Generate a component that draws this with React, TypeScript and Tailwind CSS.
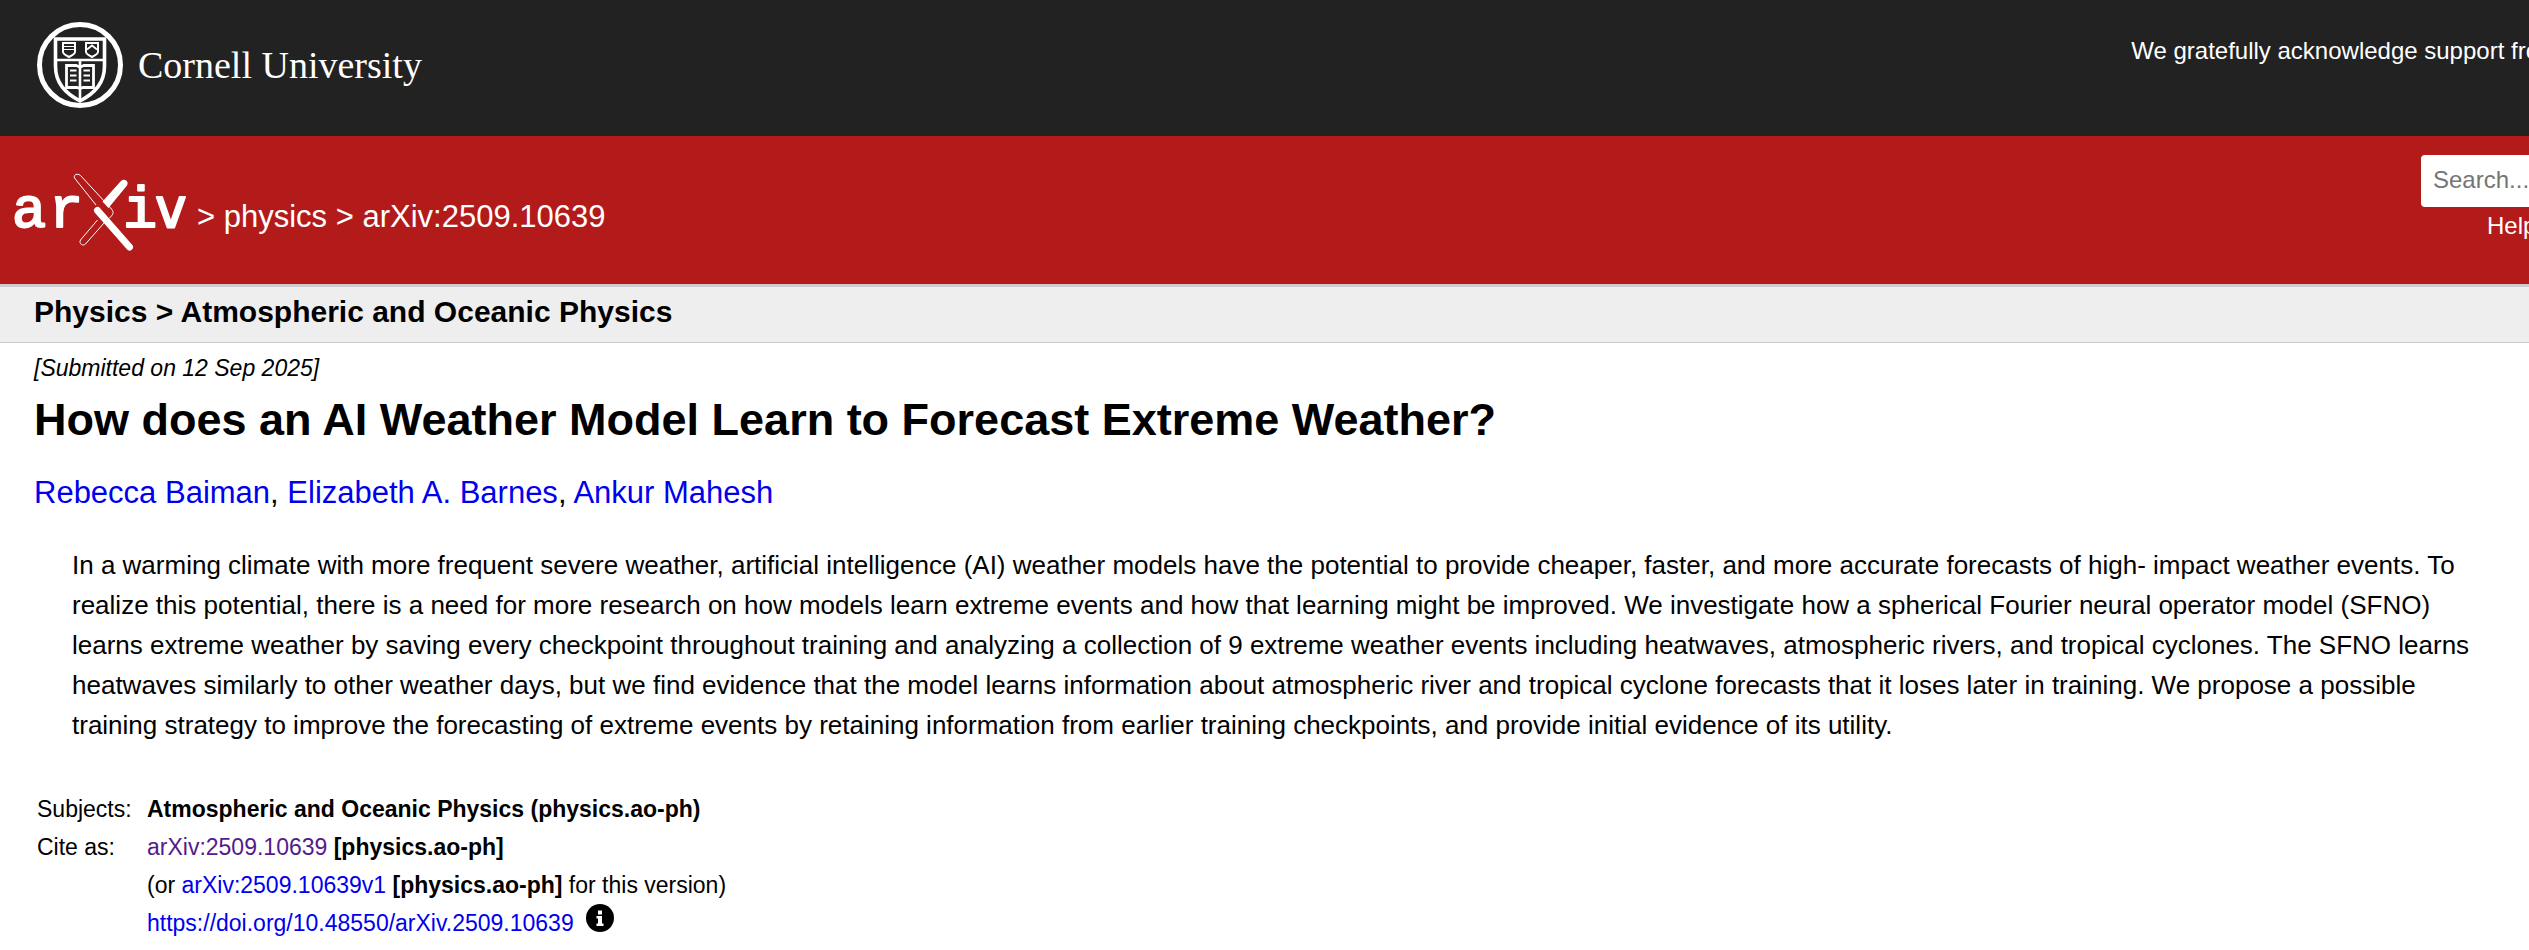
import React from "react";

const link = "text-[#0000ee] hover:underline";

function Seal() {
  return (
    <svg viewBox="0 0 100 100" className="h-[100px] w-[100px] shrink-0" fill="none" stroke="#fff" aria-hidden="true">
      <circle cx="50" cy="50" r="40.5" strokeWidth="5" />
      <path d="M25.5 24H74.5V51C74.5 68 65 78 50 86C35 78 25.5 68 25.5 51Z" strokeWidth="3.6" />
      <path d="M26 45H74" strokeWidth="2.6" />
      <path d="M50 45V86" strokeWidth="2.6" />
      <path d="M33 28H45V37C45 39 42 40.500 39 42C36 40.500 33 39 33 37Z" strokeWidth="2" />
      <path d="M33 31.500H45M33 34.500H45" strokeWidth="1" />
      <path d="M56 28H68V37C68 39 65 40.500 62 42C59 40.500 56 39 56 37Z" strokeWidth="2" />
      <path d="M57 34.500L62 30.500L67 34.500" strokeWidth="1.8" />
      <path d="M50 52L46 50.500H36.500V72.500H47L50 73.500L53 72.500H63.500V50.500H54Z" strokeWidth="2.8" />
      <path d="M40 55.500H46.500M40 60.500H46.500M40 65.500H46.500M53.500 55.500H60M53.500 60.500H60M53.500 65.500H60" strokeWidth="2" />
    </svg>
  );
}

function ArxivLogo() {
  return (
    <svg viewBox="0 0 176 80" className="h-[80px] w-[176px] shrink-0 overflow-visible" role="img" aria-label="arXiv">
      <g
        fill="#fff"
        stroke="#fff"
        strokeWidth="2"
        strokeLinejoin="round"
        fontFamily="'Liberation Mono', monospace"
        fontSize="57"
      >
        <text x="-1" y="54">a</text>
        <text x="36" y="54">r</text>
        <text x="110" y="54">i</text>
        <text x="141" y="54" fontFamily="'DejaVu Sans Mono', monospace" fontSize="56">v</text>
      </g>
      <path d="M107.500 8.500C111 4.500 116.500 8.500 114 12.500L95.500 35L89.500 28.500Z" fill="#fff" />
      <path d="M84.500 37.500L116.500 74" stroke="#fff" strokeWidth="7" strokeLinecap="round" />
      <g fill="none" stroke="#fff" strokeWidth="1">
        <path d="M83 32L61.500 5C60 1.500 65 0 67.500 2.500L98.500 36C101.500 40 100 41.500 96 45.500" />
        <path d="M84.500 47L67.500 67C65.500 71 70 73.500 72.500 71L91 50" />
      </g>
    </svg>
  );
}

export default function App() {
  return (
    <div className="overflow-hidden bg-white font-['Liberation_Sans',Arial,sans-serif] text-black">
      <header>
        <div className="flex h-[136px] items-start justify-between bg-[#222]">
          <a href="#cornell" className="flex items-center gap-2 pl-[30px] pt-[15px] text-white">
            <Seal />
            <span className="font-['Palatino_Linotype','Liberation_Serif',serif] text-[38px]">Cornell University</span>
          </a>
          <a href="#support" className="-mr-[30px] whitespace-nowrap pt-[35px] text-2xl text-white">
            We gratefully acknowledge support from
          </a>
        </div>
        <div className="flex h-[151px] items-start justify-between border-b-[3px] border-[#ccc] bg-[#b31b1b]">
          <div className="flex items-start gap-2 pl-[13px] pt-[37px] text-[31px] text-white">
            <a href="#home"><ArxivLogo /></a>
            <div className="pt-[24px] leading-[40px]">
              &gt; <a href="#physics">physics</a> &gt; <a href="#paper">arXiv:2509.10639</a>
            </div>
          </div>
          <form className="-mr-8 flex w-[140px] flex-col pt-[19px]">
            <input aria-label="Search" placeholder="Search..." className="h-[52px] w-full rounded-sm bg-white px-3 pb-[2px] text-2xl placeholder:text-[#757575]" />
            <a href="#help" className="pl-[66px] pt-[3px] text-2xl text-white">Help</a>
          </form>
        </div>
      </header>
      <div className="flex h-[56px] items-center border-b border-[#ccc] bg-[#eee] px-[34px] pb-[6px] text-[30px] font-bold">
        Physics &gt; Atmospheric and Oceanic Physics
      </div>
      <main className="px-[34px] pt-[9px]">
        <div className="text-[23px] leading-[32px] italic">[Submitted on 12 Sep 2025]</div>
        <h1 className="mt-[10px] text-[45px] leading-[52px] font-bold">
          How does an AI Weather Model Learn to Forecast Extreme Weather?
        </h1>
        <div className="mt-[27px] text-[31px] leading-[40px]">
          <a href="#baiman" className={link}>Rebecca Baiman</a>, <a href="#barnes" className={link}>Elizabeth A. Barnes</a>,{" "}
          <a href="#mahesh" className={link}>Ankur Mahesh</a>
        </div>
        <blockquote className="mr-[10px] ml-[38px] mt-[32px] text-[26px] leading-[40px]">
          In a warming climate with more frequent severe weather, artificial intelligence (AI) weather models have the
          potential to provide cheaper, faster, and more accurate forecasts of high- impact weather events. To realize this
          potential, there is a need for more research on how models learn extreme events and how that learning might be
          improved. We investigate how a spherical Fourier neural operator model (SFNO) learns extreme weather by saving
          every checkpoint throughout training and analyzing a collection of 9 extreme weather events including heatwaves,
          atmospheric rivers, and tropical cyclones. The SFNO learns heatwaves similarly to other weather days, but we find
          evidence that the model learns information about atmospheric river and tropical cyclone forecasts that it loses
          later in training. We propose a possible training strategy to improve the forecasting of extreme events by
          retaining information from earlier training checkpoints, and provide initial evidence of its utility.
        </blockquote>
        <table className="mt-[45px] ml-[3px] text-left text-[23px] leading-[38px]">
          <tbody>
            <tr>
              <td className="w-[110px]">Subjects:</td>
              <td className="font-bold">Atmospheric and Oceanic Physics (physics.ao-ph)</td>
            </tr>
            <tr>
              <td>Cite as:</td>
              <td><a href="#cite" className="text-[#551a8b]">arXiv:2509.10639</a> <b>[physics.ao-ph]</b></td>
            </tr>
            <tr>
              <td />
              <td>(or <a href="#v1" className={link}>arXiv:2509.10639v1</a> <b>[physics.ao-ph]</b> for this version)</td>
            </tr>
            <tr>
              <td />
              <td>
                <div className="flex items-start gap-3">
                  <a href="#doi" className={link}>https://doi.org/10.48550/arXiv.2509.10639</a>
                  <svg viewBox="0 0 28 28" className="h-7 w-7" aria-hidden="true">
                    <circle cx="14" cy="14" r="14" />
                    <path d="M12 6.500h4v4h-4zM10.500 12H16v7.500h1.500V22h-7v-2.500H12v-5h-1.500z" fill="#fff" />
                  </svg>
                </div>
              </td>
            </tr>
          </tbody>
        </table>
      </main>
    </div>
  );
}
